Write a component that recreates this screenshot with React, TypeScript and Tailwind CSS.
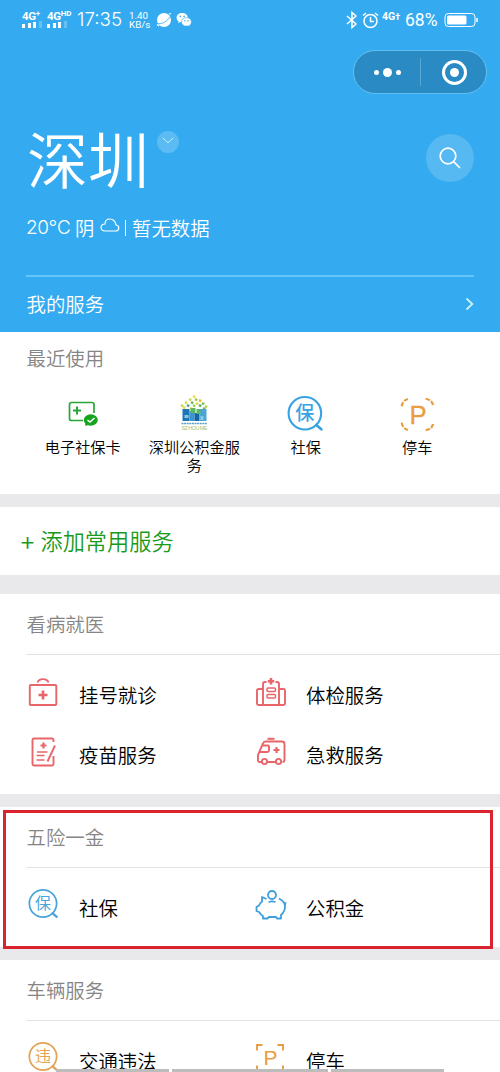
import React from 'react';

const bars = [4, 5, 6, 7];

function Signal({ label, sup }: { label: string; sup: string }) {
  return (
    <div className="flex flex-col">
      <div className="flex h-[10px] items-start text-[11.5px] font-bold leading-[10px] tracking-[-0.3px]">
        {label}
        <span className="text-[8px] leading-[6px]">{sup}</span>
      </div>
      <div className="flex h-[7px] items-end gap-[2.6px]">
        {bars.map((h, i) => (
          <i
            key={h}
            className={i === 3 ? 'w-[3px] bg-white/25' : 'w-[3px] bg-white'}
            style={{ height: h }}
          />
        ))}
      </div>
    </div>
  );
}

function StatusBar() {
  return (
    <div className="flex h-[40px] items-center font-['Roboto'] text-white">
      <div className="ml-[22px] mt-[-2px] w-[25px]">
        <Signal label="4G" sup="+" />
      </div>
      <div className="mt-[-2px] w-[30px]">
        <Signal label="4G" sup="HD" />
      </div>
      <span className="w-[52px] whitespace-nowrap font-['Inter'] text-[18.8px] font-light">
        17:35
      </span>
      <div className="w-[27px] text-[9.8px] leading-[9px]">
        <div>1.40</div>
        <div>KB/s</div>
      </div>
      <svg width="16" height="16" viewBox="0 0 16 16" className="shrink-0">
        <circle cx="8" cy="8" r="7" fill="#fff" />
        <path d="M1 11.500C6 12.500 11.500 9.500 14 4.500" stroke="#34abf0" strokeWidth=".8" fill="none" />
        <path d="M1 12.500L3 14M13 2l2-0.400" stroke="#fff" strokeWidth="1.200" />
      </svg>
      <svg width="16" height="16" viewBox="0 0 16 16" className="ml-[4px] shrink-0">
        <path d="M6.200 1C3 1 .6 3 .6 5.700c0 1.600.8 2.800 2 3.700l-.5 1.800 2-1.100c.7.2 1.400.3 2.100.3 3 0 5.600-2 5.600-4.700S9.200 1 6.200 1z" fill="#fff" />
        <path d="M10.500 5.600c-2.900 0-5 1.900-5 4.300s2.100 4.200 5 4.200c.6 0 1.200-.1 1.700-.3l1.900 1-.5-1.600c1.100-.8 1.800-1.900 1.800-3.300 0-2.400-2.200-4.300-4.900-4.300z" fill="#fff" stroke="#34abf0" strokeWidth=".6" />
        <g fill="#34abf0">
          <circle cx="4.300" cy="4.400" r=".8" />
          <circle cx="8.100" cy="4.400" r=".8" />
          <circle cx="8.900" cy="8.800" r=".7" />
          <circle cx="12.100" cy="8.800" r=".7" />
        </g>
      </svg>
      <svg width="12" height="18" viewBox="0 0 12 18" fill="none" stroke="#fff" strokeWidth="1.500" className="ml-[154px] shrink-0">
        <path d="M1 5l9 8-4 3.500V1.500L10 5l-9 8" />
      </svg>
      <svg width="17" height="17" viewBox="0 0 17 17" fill="none" stroke="#fff" strokeWidth="1.500" className="ml-[4px] shrink-0">
        <circle cx="8.500" cy="9" r="6.500" />
        <path d="M8.500 5v4.500H12M1 3.500L4 1M16 3.500L13 1" />
      </svg>
      <div className="ml-[3px] mt-[-6px] w-[23px] text-[10.5px] font-bold leading-none">
        4G<span className="text-[9px]">†</span>
      </div>
      <span className="w-[40px] text-[17.5px]">68%</span>
      <svg width="35" height="16" viewBox="0 0 35 16" className="-ml-px shrink-0">
        <rect x="1" y="1.500" width="30" height="13" rx="3.500" fill="none" stroke="#fff" strokeWidth="1" />
        <rect x="3" y="3.500" width="19.500" height="9" rx="1.500" fill="#fff" />
        <path d="M33 6v4" stroke="#fff" strokeWidth="1.500" />
      </svg>
    </div>
  );
}

function Bao({ size, char, color, bold }: { size: number; char: string; color: string; bold?: boolean }) {
  return (
    <svg width={size} height={size} viewBox="0 0 30 30" className="overflow-visible">
      <circle cx="14.500" cy="14" r="13.200" fill="none" stroke={color} strokeWidth="1.700" />
      <path d="M23.800 23.500l4 3.500" stroke={color} strokeWidth="2.200" strokeLinecap="round" />
      <text
        x="14.500"
        y="19.500"
        textAnchor="middle"
        fontSize="15.500"
        fontWeight={bold ? 500 : 400}
        fill={color}
        fontFamily="Noto Sans CJK SC, sans-serif"
      >
        {char}
      </text>
    </svg>
  );
}

function BagIcon() {
  return (
    <svg width="30" height="30" viewBox="0 0 30 30" fill="none" stroke="#e8656a" strokeWidth="1.900">
      <rect x="1.800" y="8" width="26.500" height="20" rx="1" />
      <path d="M9.500 5.500C11 1 19 1 20.500 5.500" />
      <path d="M15 13.500v9M10.500 18h9" strokeWidth="2.600" />
    </svg>
  );
}

function HospitalIcon() {
  return (
    <svg width="30" height="30" viewBox="0 0 30 30" fill="none" stroke="#e8656a" strokeWidth="1.900" className="ml-px">
      <path d="M7 28V7q0-2 2-2h1.500M19.500 5H21q2 0 2 2v21M7 12H2.500q-1.500 0-1.500 1.500V26.500q0 1.500 1.500 1.500h25q1.500 0 1.500-1.500V13.500q0-1.500-1.500-1.500H23" />
      <rect x="11" y="11" width="8.500" height="3.500" rx="1" strokeWidth="1.500" />
      <rect x="11" y="17.500" width="8.500" height="3.500" rx="1" strokeWidth="1.500" />
      <path d="M15 1v6.500M11.800 4.300h6.500" strokeWidth="2.600" />
    </svg>
  );
}

function NoteIcon() {
  return (
    <svg width="30" height="30" viewBox="0 0 30 30" fill="none" stroke="#e8656a" strokeWidth="1.900">
      <path d="M25.500 5V3q0-1.500-1.500-1.500H6Q4.500 1.500 4.500 3v24q0 1.500 1.500 1.500h18q1.500 0 1.500-1.500v-8" />
      <path d="M27 8.500l-7.500 16" />
      <path d="M15.500 5.500v6M12.500 8.500h6" strokeWidth="2.200" />
      <path d="M9 15h10.500M8.500 18.500h8M8.500 23h8" strokeWidth="1.400" />
    </svg>
  );
}

function AmbulanceIcon() {
  return (
    <svg width="30" height="30" viewBox="0 0 30 30" fill="none" stroke="#e8656a" strokeWidth="1.900" className="ml-px">
      <path d="M5.500 25H3.500Q2 25 2 23.500V18L7 6.500Q7.700 4.500 9.500 4.500H26q2.500 0 2.500 2.500V23q0 2-2 2M11.500 25h8" />
      <path d="M6.500 8.500H12q1 0 1 1V13.500q0 1.500-1.500 1.500H4" />
      <path d="M11.500 1.800h7" strokeWidth="2" />
      <path d="M20.500 10v6M17.500 13h6" strokeWidth="2.200" />
      <circle cx="8.500" cy="24.500" r="2.600" />
      <circle cx="22.500" cy="24.500" r="2.600" />
    </svg>
  );
}

function PigIcon() {
  return (
    <svg width="32" height="30" viewBox="0 0 32 30" fill="none" stroke="#3f9fdb" strokeWidth="1.800" strokeLinejoin="round">
      <circle cx="17" cy="5" r="4" />
      <path d="M11.500 9L7 7v4.500Q5 13 4 15.500L1.500 17v4L4 22q2 3 4 4v2.500h4.500L14 27h7l1 1.500h4V25q4-3.500 4-8.500 0-5-6-8" />
      <path d="M13.500 12q3.500-1.200 7 0" />
      <path d="M29 15.500q2-.8 2-3.500" strokeWidth="1.200" />
    </svg>
  );
}

function ParkIcon({ size, round }: { size: number; round?: boolean }) {
  return (
    <svg width={size} height={size} viewBox="0 0 30 30" fill="none" stroke="#e99d42" strokeWidth="1.900">
      {round ? (
        <path d="M1.500 8Q2 2.500 8 1.500M22 1.500Q28 2.500 28.500 8M1.500 22Q2 27.500 8 28.500M22 28.500Q28 27.500 28.500 22" strokeDasharray="3.800 1.200" />
      ) : (
        <path d="M2 7.500V2h5.500M22.500 2H28v5.500M2 22.500V28h5.500M22.500 28H28v-5.500" />
      )}
      <text
        x="15.500"
        y={round ? 22.8 : 22}
        textAnchor="middle"
        fontSize={round ? 22 : 21}
        fill="#e99d42"
        strokeWidth={round ? 0.3 : 0}
        fontFamily="Liberation Sans, sans-serif"
      >
        P
      </text>
    </svg>
  );
}

function CardIcon() {
  return (
    <svg width="30" height="26" viewBox="0 0 30 26" fill="none" stroke="#2aa637" strokeWidth="1.700">
      <path d="M15 19.500H3.500Q1.500 19.500 1.500 17.500V3.500Q1.500 1.500 3.500 1.500H24q2 0 2 2V12" />
      <path d="M9 5.500v8M5 9.500h8" strokeWidth="2" />
      <ellipse cx="22.800" cy="19" rx="7" ry="5.700" fill="#17a31f" stroke="none" />
      <path d="M17 22l.5 3 4-1.500z" fill="#17a31f" stroke="none" />
      <path d="M19.500 19l2.500 2 4.500-4" stroke="#fff" strokeWidth="1.500" />
    </svg>
  );
}

const dots: [number, number, string][] = [
  [14, 1, '#e8dc4c'], [10, 4, '#c9d94a'], [16, 4, '#9cc84b'], [20, 5, '#e6b83f'],
  [6, 7, '#dfd84b'], [12, 7, '#6fb955'], [17, 8, '#d9dd55'], [23, 8, '#7fbf4d'],
  [2, 10, '#c9d94a'], [8, 10, '#4aa88a'], [14, 10, '#a8cf4b'], [20, 10, '#58b35c'],
  [26, 11, '#b9d45a'], [4, 12, '#dfd84b'], [24, 13, '#6fb955'], [11, 13, '#d9dd55'],
];

function HouseIcon() {
  return (
    <svg width="31" height="36" viewBox="0 0 30 36" className="-mt-[5px]">
      {dots.map(([x, y, c]) => (
        <rect key={`${x}-${y}`} x={x} y={y} width="2.500" height="2.500" fill={c} transform={`rotate(25 ${x} ${y})`} />
      ))}
      <path d="M3 15h7v12H3z" fill="#1d76b5" />
      <path d="M10 17h5v10h-5z" fill="#3a96cf" />
      <path d="M15 19h5v8h-5z" fill="#1565a6" />
      <path d="M20 15h7v12h-7z" fill="#4ba5d2" />
      <path d="M11 14h5v5h-5zM17 15h4v5h-4z" fill="#5cb762" />
      <path d="M5 21h4v3H5zM21 22h3v4h-3z" fill="#8fc6e2" />
      <path d="M2 29.500h26" stroke="#5c9fc6" strokeWidth="1.500" strokeDasharray="2 .6" />
      <text x="15" y="35.500" textAnchor="middle" fontSize="5.500" textLength="26" fill="#a9bf72" fontFamily="Liberation Sans, sans-serif">
        SZ HOU ME
      </text>
    </svg>
  );
}

const recent = [
  { name: '电子社保卡', icon: <CardIcon /> },
  { name: '深圳公积金服务', icon: <HouseIcon /> },
  { name: '社保', icon: <Bao size={37} char="保" color="#37a3e2" bold /> },
  { name: '停车', icon: <ParkIcon size={35} round /> },
];

type Item = { name: string; icon: React.ReactNode };

const medical: Item[] = [
  { name: '挂号就诊', icon: <BagIcon /> },
  { name: '体检服务', icon: <HospitalIcon /> },
  { name: '疫苗服务', icon: <NoteIcon /> },
  { name: '急救服务', icon: <AmbulanceIcon /> },
];

const insurance: Item[] = [
  { name: '社保', icon: <Bao size={31} char="保" color="#4aa5dc" /> },
  { name: '公积金', icon: <PigIcon /> },
];

const vehicle: Item[] = [
  { name: '交通违法', icon: <Bao size={31} char="违" color="#e2a354" /> },
  { name: '停车', icon: <ParkIcon size={30} /> },
];

function Section({ title, items }: { title: string; items: Item[] }) {
  return (
    <section className="bg-white pl-[26px]">
      <h2 className="flex h-[61px] items-center border-b border-[#e2e2e2] pl-[0.5px] text-[19.4px] font-[350] text-[#858585]">
        {title}
      </h2>
      <div className="grid grid-cols-[227px_1fr] pt-[10px]">
        {items.map((item) => (
          <div key={item.name} className="flex h-[60px] items-center">
            <div className="-mt-[7px] ml-[2px] w-[51px]">{item.icon}</div>
            <span className="text-[19.4px] font-[350] leading-none text-black">{item.name}</span>
          </div>
        ))}
      </div>
    </section>
  );
}

export default function App() {
  return (
    <div className="relative h-[1072px] w-[500px] overflow-hidden bg-[#e9e9eb] font-['Noto_Sans_CJK_SC',sans-serif]">
      <header className="flex h-[332px] flex-col bg-[#34abf0] text-white">
        <StatusBar />
        <div className="ml-auto mr-[13px] mt-[10px] flex h-[44px] w-[134px] items-center rounded-full border border-[#62bff3] bg-[#2a8ac3]">
          <div className="flex w-[66px] items-center justify-center gap-[4px]">
            <i className="size-[5px] rounded-full bg-white" />
            <i className="size-[9px] rounded-full bg-white" />
            <i className="size-[5px] rounded-full bg-white" />
          </div>
          <div className="h-[28px] w-px bg-[#58a7d4]" />
          <div className="ml-[21px] flex size-[25px] items-center justify-center rounded-full border-[3.5px] border-white">
            <i className="size-[9px] rounded-full bg-white" />
          </div>
        </div>
        <div className="flex h-[116px] pl-[27px] pr-[26px]">
          <h1 className="mt-[32px] w-[123px] text-[61px] font-[350] leading-[64px]">深圳</h1>
          <div className="ml-[7px] mt-[37px] flex size-[22px] justify-center rounded-full bg-white/20 pt-[6px]">
            <svg width="12" height="7" viewBox="0 0 12 7" fill="none" stroke="#c8f0fb">
              <path d="M.8.800L6 5.800 11.200.8" />
            </svg>
          </div>
          <div className="ml-auto mt-[40px] flex size-[48px] items-center justify-center rounded-full bg-white/17">
            <svg width="22" height="22" viewBox="0 0 22 22" fill="none" stroke="#fff" strokeWidth="1.700">
              <circle cx="9" cy="9" r="7.800" />
              <path d="M14.500 14.500l6.500 6.500" />
            </svg>
          </div>
        </div>
        <div className="flex h-[36px] items-center pl-[26px] text-[19.4px] font-[350]">
          <span className="w-[49px] whitespace-nowrap font-['Inter','Noto_Sans_CJK_SC',sans-serif] text-[19px] font-light tracking-[-0.5px]">20℃</span>
          <span className="w-[25px]">阴</span>
          <svg width="20" height="15" viewBox="0 0 20 15" fill="none" stroke="#fff" strokeWidth="1.200" className="mb-[5px]">
            <path d="M5 13h10.500c4 0 4.500-5.500.5-6C15.500 3 12.500 1 10 1 7 1 5 3 5 6 0 6-.5 13 5 13z" />
          </svg>
          <i className="ml-[5px] h-[16px] w-px bg-white" />
          <span className="ml-[6px]">暂无数据</span>
        </div>
        <div className="mx-[26px] mt-[29px] h-[2px] shrink-0 bg-[#65c5f7]" />
        <div className="flex flex-1 items-center justify-between pb-px pl-[26.5px] pr-[26px] text-[19.4px] font-[350]">
          我的服务
          <svg width="9" height="14" viewBox="0 0 9 14" fill="none" stroke="#c6f0fb" strokeWidth="1.900">
            <path d="M1.500 1.500L7.300 7l-5.800 5.500" />
          </svg>
        </div>
      </header>

      <section className="h-[162px] bg-white">
        <h2 className="flex h-[52px] items-center pl-[26.5px] text-[19.4px] font-[350] text-[#858585]">最近使用</h2>
        <div className="grid grid-cols-4 pl-[27px] pr-[27px]">
          {recent.map((r) => (
            <div key={r.name} className="flex flex-col items-center">
              <div className="flex h-[53px] items-center pt-[7px]">{r.icon}</div>
              <div className="w-[93px] text-center text-[15.2px] font-[350] leading-[18px] text-black">{r.name}</div>
            </div>
          ))}
        </div>
      </section>

      <div className="mt-[13px] flex h-[68px] items-center bg-white pl-[19px] text-[22.2px] font-[350] text-[#189a1c]">
        <span className="w-[21.5px] pb-[2px] font-['Inter'] text-[26px] font-light">+</span>添加常用服务
      </div>

      <div className="mt-[19px] h-[200px] bg-white">
        <Section title="看病就医" items={medical} />
      </div>
      <div className="mt-[13px] h-[140px] bg-white">
        <Section title="五险一金" items={insurance} />
      </div>
      <div className="mt-[13px] h-[112px] bg-white">
        <Section title="车辆服务" items={vehicle} />
      </div>

      {/* highlight frame over the insurance block */}
      <div className="absolute left-[3px] top-[810px] h-[139px] w-[490px] border-[3px] border-[#d9232e]" />

      <div className="absolute bottom-0 left-[56px] flex h-[3px] gap-[3px]">
        <i className="w-[113px] bg-[#bdbdbd]" />
        <i className="w-[156px] bg-[#bdbdbd]" />
        <i className="w-[113px] bg-[#bdbdbd]" />
      </div>
    </div>
  );
}
